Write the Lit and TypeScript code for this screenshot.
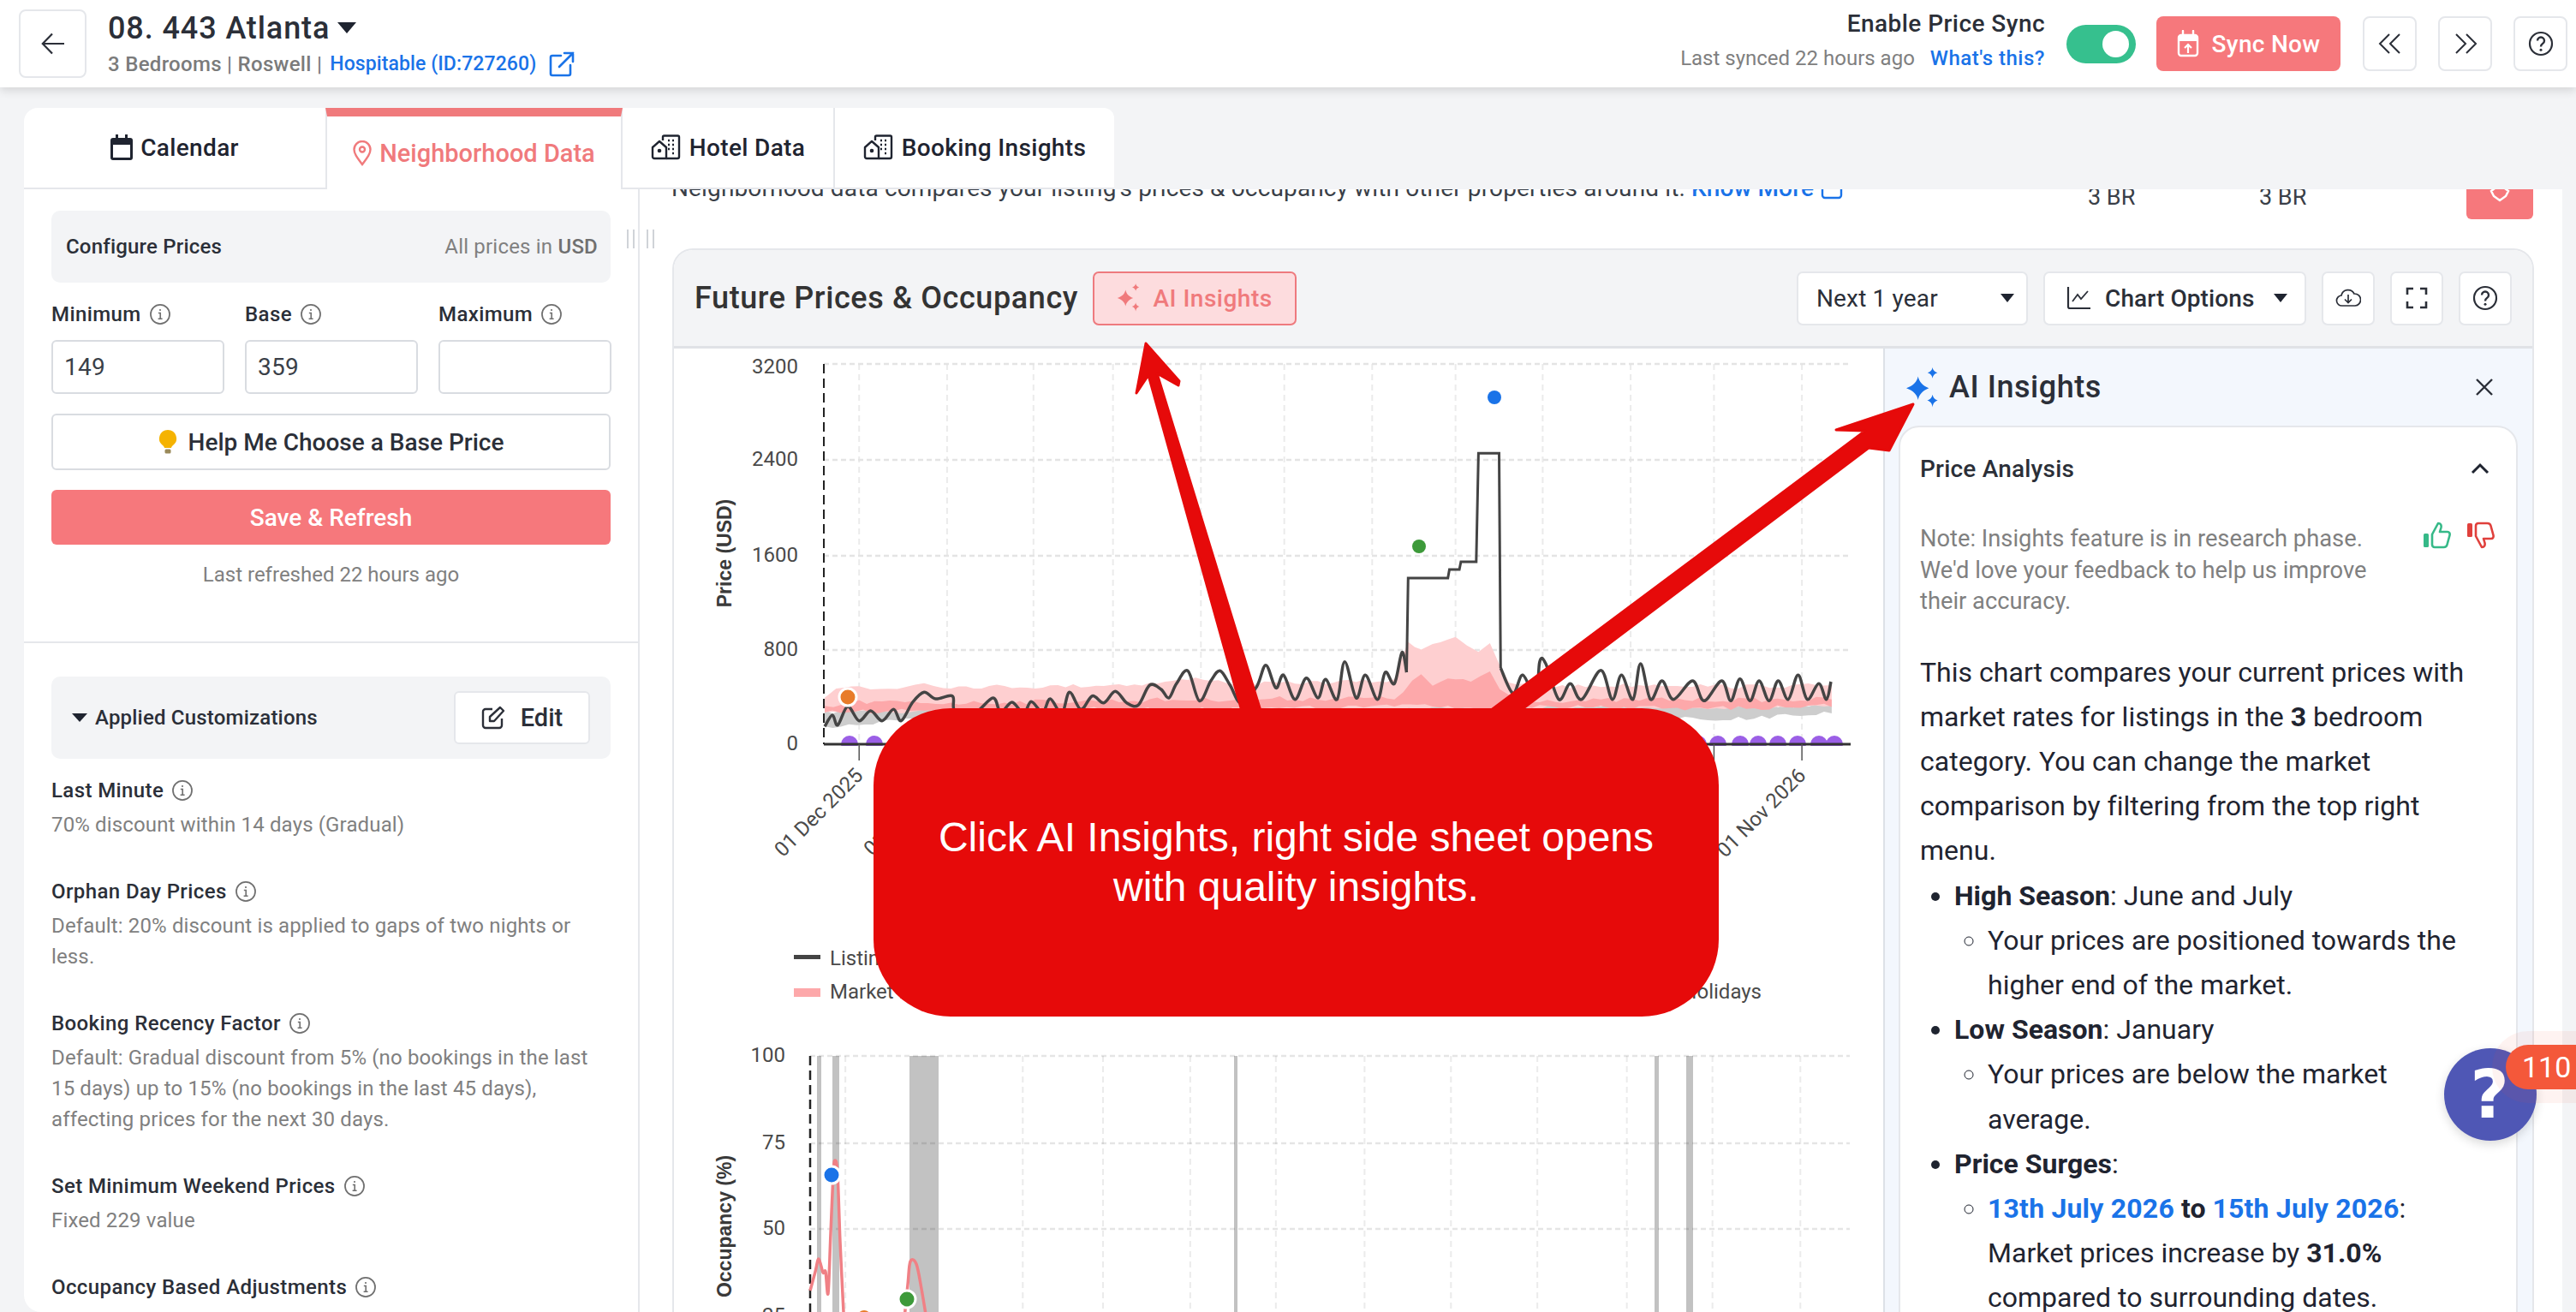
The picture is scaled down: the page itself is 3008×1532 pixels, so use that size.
import { LitElement, html, css, svg } from "lit";
import { customElement } from "lit/decorators.js";

const zx = (x: number) => 780 + x / 1.12;
const zy = (y: number) => 400 + y / 3;
const zp = (a: number[][]) => a.map(([x, y]) => [zx(x), zy(y)]);
let seed = 7;
const rnd = () => { seed = (seed * 16807) % 2147483647; return seed / 2147483647; };
const jag = (a: number[][], amp: number) => {
  const p = zp(a);
  const out: number[][] = [];
  for (let i = 0; i < p.length - 1; i++) {
    const [x0, y0] = p[i];
    const [x1, y1] = p[i + 1];
    const n = Math.max(1, Math.round(Math.abs(x1 - x0) / 9));
    for (let k = 0; k < n; k++) {
      const t = k / n;
      const edge = x0 === x1 ? 0 : amp;
      out.push([x0 + (x1 - x0) * t, y0 + (y1 - y0) * t + (rnd() - 0.5) * edge]);
    }
  }
  out.push(p[p.length - 1]);
  return out.map(([x, y]) => `${x.toFixed(1)},${y.toFixed(1)}`).join(" ");
};
const smooth = (p: number[][]) => {
  let d = `M${p[0][0].toFixed(1)} ${p[0][1].toFixed(1)}`;
  for (let i = 0; i < p.length - 1; i++) {
    const a = p[Math.max(0, i - 1)];
    const b = p[i];
    const c = p[i + 1];
    const e = p[Math.min(p.length - 1, i + 2)];
    const c1x = b[0] + (c[0] - a[0]) / 6;
    const c1y = b[1] + (c[1] - a[1]) / 6;
    const c2x = c[0] - (e[0] - b[0]) / 6;
    const c2y = c[1] - (e[1] - b[1]) / 6;
    d += ` C${c1x.toFixed(1)} ${c1y.toFixed(1)} ${c2x.toFixed(1)} ${c2y.toFixed(1)} ${c[0].toFixed(1)} ${c[1].toFixed(1)}`;
  }
  return d;
};

const listingA = zp([[205,1345],[215,1305],[222,1340],[235,1275],[250,1325],[265,1290],[280,1325],[295,1285],[305,1325],[320,1260],[335,1225],[350,1248],[372,1238],[375,1290],[400,1300],[425,1245],[435,1295],[450,1260],[465,1300],[475,1258],[490,1295],[500,1248],[515,1300],[525,1225],[540,1285],[555,1238],[570,1262],[585,1222],[600,1262],[615,1270],[630,1200],[645,1215],[655,1245],[665,1195],[680,1150],[695,1255],[710,1185],[722,1150],[735,1200],[750,1265],[770,1205],[782,1130],[795,1210],[805,1165],[820,1250],[835,1175],[850,1245],[860,1180],[875,1250],[885,1118],[900,1245],[912,1165],[928,1250],[938,1155],[950,1195],[960,1085],[966,1155]]);
const listingB = zp([[1089,1140],[1105,1228],[1118,1165],[1135,1245],[1140,1118],[1148,1125],[1165,1250],[1180,1195],[1195,1250],[1220,1148],[1235,1250],[1247,1165],[1262,1250],[1272,1125],[1285,1250],[1300,1185],[1315,1250],[1340,1185],[1355,1255],[1378,1185],[1390,1255],[1402,1178],[1415,1255],[1427,1185],[1440,1255],[1452,1185],[1465,1250],[1478,1165],[1490,1250],[1505,1195],[1515,1250],[1521,1188]]);
const spike = zp([[966,1155],[968,825],[1020,825],[1022,795],[1035,795],[1037,768],[1057,768],[1060,388],[1087,388],[1089,1140]]);
const spikeStr = spike.map(([x, y]) => `${x.toFixed(1)},${y.toFixed(1)}`).join(" ");

const bandGrey = jag([[205,1295],[300,1280],[950,1265],[1000,1258],[1100,1270],[1522,1272],[1522,1298],[1400,1318],[1200,1310],[1000,1300],[300,1325],[205,1345]], 5);
const bandLight = jag([[205,1240],[220,1210],[250,1205],[265,1215],[300,1210],[335,1190],[360,1205],[500,1205],[630,1195],[700,1175],[730,1190],[780,1195],[850,1190],[950,1185],[968,1045],[985,1075],[1000,1055],[1030,1028],[1045,1060],[1060,1090],[1075,1060],[1088,1130],[1100,1195],[1180,1205],[1300,1198],[1400,1205],[1522,1200],[1522,1275],[205,1295]], 5);
const bandDark = jag([[205,1280],[250,1260],[400,1262],[700,1250],[950,1245],[985,1165],[1000,1200],[1020,1180],[1050,1190],[1075,1150],[1088,1215],[1110,1250],[1200,1255],[1300,1250],[1400,1252],[1522,1250],[1522,1272],[1400,1280],[1300,1280],[950,1275],[205,1295]], 6);

const c1Grid = [250,365,478,582,697,806,921,1030,1144,1259,1368,1483].map(zx);
const c2Grid = [232,349,464,569,683,795,911,1024,1137,1254,1366,1481].map(zx);
const purple = [992,1021,1983,2006,2032,2053,2076,2099,2124,2142];

const pinkA = [[946,1507],[952,1485],[956,1470],[961,1486],[964,1485],[967,1510],[970,1440],[973,1370],[975,1355],[978,1370],[981,1450],[985,1532]];
const pinkB = [[1056,1540],[1060,1500],[1063,1473],[1070,1476],[1076,1505],[1081,1535]];

const info = html`<svg class="ic-info" viewBox="0 0 24 24" fill="none" stroke="currentColor" stroke-width="1.6"><circle cx="12" cy="12" r="10.2"/><path d="M10 10.6h2.2v6.2M9.8 16.9h4.6" stroke-width="1.5"/><circle cx="12" cy="7.4" r="1" fill="currentColor" stroke="none"/></svg>`;
const hotel = html`<svg class="ic-tab" viewBox="0 0 36 30" fill="none" stroke="currentColor" stroke-width="2.4" stroke-linejoin="round"><path d="M2 15 10 8l8 7v13H4a2 2 0 0 1-2-2Z"/><circle cx="10" cy="19" r="2.3" fill="currentColor" stroke="none"/><path d="M14 7V3a1.5 1.5 0 0 1 1.5-1.5h16A1.5 1.5 0 0 1 33 3v23a2 2 0 0 1-2 2H18"/><path d="M20 7h2M25 7h2M20 12h2M25 12h2M20 17h2M25 17h2M25 22h2" stroke-width="2.6"/></svg>`;
const sparkle = html`<svg viewBox="0 0 36 46" fill="currentColor"><path d="M13 10c1.2 6 4.8 10 12 13-7.200 3-10.800 7-12 13C11.800 30 8 26 0 23c8-3 11.800-7 13-13Z"/><path d="M29 0c.5 3 2 4.700 5.500 6C31 7.300 29.500 9 29 12c-.5-3-2-4.700-5.500-6C27 4.700 28.500 3 29 0Z"/><path d="M29 30c.6 3.300 2.200 5.200 5.800 6.500C31.200 37.800 29.600 39.700 29 44c-.6-4.300-2.200-6.200-5.800-7.500C26.800 35.200 28.400 33.300 29 30Z"/></svg>`;

@customElement("app-root")
export class AppRoot extends LitElement {
  static styles = css`
    :host { display: block; position: relative; width: 3008px; height: 1532px; overflow: hidden; background: #f3f4f6; font-family: Roboto, "Liberation Sans", sans-serif; color: #1f2430; }
    * { box-sizing: border-box; }
    svg { display: block; flex: none; }

    .top { height: 102px; background: #fff; box-shadow: 0 4px 10px rgba(0,0,0,.12); display: flex; align-items: center; padding: 0 10px 0 22px; position: relative; z-index: 2; }
    .back { width: 79px; height: 80px; border: 2px solid #e5e7eb; border-radius: 8px; display: flex; align-items: center; justify-content: center; }
    .back svg { width: 28px; height: 26px; }
    .ttl { margin-left: 25px; flex: 1; }
    .ttl-a { font-size: 36px; font-weight: 500; line-height: 42px; color: #2b2f38; display: flex; align-items: center; letter-spacing: .9px; margin-top: -1px; }
    .caret { width: 0; height: 0; border-left: 11px solid transparent; border-right: 11px solid transparent; border-top: 13px solid #1f2430; margin-left: 9px; }
    .ttl-b { display: flex; align-items: center; font-size: 24px; color: #7b7b7b; line-height: 30px; margin-top: 6px; font-weight: 500; letter-spacing: .3px; }
    .ttl-b a { color: #1a73e8; font-size: 23px; margin-left: 9px; letter-spacing: .1px; }
    .ttl-b svg { width: 30px; height: 30px; margin-left: 15px; }
    .sync { text-align: right; margin: 0 25px 9px 0; }
    .sync-a { font-size: 28px; font-weight: 500; color: #2b2f38; line-height: 34px; letter-spacing: .45px; }
    .sync-b { font-size: 24px; color: #808080; line-height: 30px; margin-top: 8px; }
    .sync-b a { color: #1a73e8; font-weight: 500; margin-left: 12px; letter-spacing: .5px; }
    .toggle { width: 81px; height: 45px; border-radius: 23px; background: #36c08e; margin-right: 24px; display: flex; align-items: center; justify-content: flex-end; padding-right: 8px; }
    .toggle i { width: 31px; height: 31px; border-radius: 50%; background: #fff; display: block; }
    .syncbtn { width: 215px; height: 64px; border-radius: 8px; background: #f6787c; color: #fff; font-size: 28px; font-weight: 500; display: flex; align-items: center; justify-content: center; gap: 15px; margin-right: 26px; letter-spacing: .3px; }
    .syncbtn svg { width: 26px; height: 32px; }
    .sq { width: 63px; height: 64px; background: #fff; border: 2px solid #e5e7eb; border-radius: 8px; display: flex; align-items: center; justify-content: center; margin-left: 25px; color: #2b2f38; }
    .syncbtn + .sq { margin-left: 0; }
    .sq svg { width: 30px; height: 30px; }

    .tabs { display: flex; height: 95px; margin: 24px 0 0 28px; }
    .tab { display: flex; align-items: center; justify-content: center; gap: 9px; font-size: 28px; font-weight: 500; background: #fff; border-bottom: 2px solid #e5e7eb; padding-bottom: 1px; color: #1f2430; letter-spacing: .35px; }
    .tab.cal { width: 352px; border-radius: 16px 0 0 0; }
    .tab.hood { width: 347px; border-top: 10px solid #f07a7c; border-bottom: none; border-left: 2px solid #e5e7eb; border-right: 2px solid #e5e7eb; color: #f07a7c; padding-bottom: 0; font-size: 29px; letter-spacing: 0; }
    .tab.hot { width: 246px; }
    .tab.book { width: 328px; border-left: 2px solid #e5e7eb; border-radius: 0 12px 0 0; }
    .ic-tab { width: 36px; height: 30px; }
    .tab svg.cali { width: 26px; height: 30px; }
    .tab svg.pin { width: 22px; height: 30px; }

    .main { display: flex; height: 1311px; margin: 0 16px 0 28px; background: #fff; border-radius: 0 0 0 20px; position: relative; }
    .left { width: 719px; border-right: 2px solid #e5e7eb; padding: 25px 32px 0; overflow: hidden; flex: none; border-radius: 0 0 0 20px; }
    .box { background: #f3f4f6; border-radius: 10px; display: flex; align-items: center; justify-content: space-between; }
    .cfg { height: 84px; padding: 0 15px 0 17px; font-size: 24px; font-weight: 500; color: #2b2f38; letter-spacing: .2px; }
    .cfg span { font-weight: 400; color: #808080; letter-spacing: .2px; }
    .cfg b { font-weight: 500; color: #707070; }
    .grid3 { display: grid; grid-template-columns: repeat(3, 202px); column-gap: 24px; margin-top: 22px; }
    .fl { display: flex; align-items: center; gap: 9px; font-size: 24px; font-weight: 500; color: #2b2f38; height: 30px; letter-spacing: .4px; }
    .ic-info { width: 26px; height: 26px; color: #707070; }
    .inp { height: 63px; margin-top: 15px; border: 2px solid #d9dce1; border-radius: 6px; padding-left: 13px; font-size: 28px; line-height: 60px; color: #3a3f48; letter-spacing: .3px; }
    .btn { display: flex; align-items: center; justify-content: center; border-radius: 6px; font-size: 28px; font-weight: 500; }
    .help { height: 66px; margin-top: 23px; border: 2px solid #d9dce1; color: #2b2f38; gap: 13px; }
    .help svg { width: 22px; height: 30px; }
    .save { height: 64px; margin-top: 23px; background: #f6787c; color: #fff; }
    .refreshed { text-align: center; font-size: 24px; line-height: 32px; margin-top: 19px; color: #808080; }
    .div { height: 2px; background: #e5e7eb; margin: 62px -32px 39px; }
    .cust { height: 96px; padding: 0 24px 0 24px; }
    .cust-t { display: flex; align-items: center; font-size: 24px; font-weight: 500; color: #2b2f38; gap: 9px; letter-spacing: .2px; }
    .cust-t i { width: 0; height: 0; border-left: 9px solid transparent; border-right: 9px solid transparent; border-top: 10px solid #1f2430; display: block; }
    .edit { width: 159px; height: 62px; background: #fff; border: 2px solid #e5e7eb; border-radius: 6px; display: flex; align-items: center; justify-content: center; gap: 18px; font-size: 29px; font-weight: 500; color: #2b2f38; }
    .edit svg { width: 28px; height: 28px; }
    .item { margin-top: 42px; }
    .item.first { margin-top: 19px; }
    .item .fl { height: 36px; }
    .desc { font-size: 24px; line-height: 36px; color: #808080; margin-top: 4px; letter-spacing: .14px; }
    .lnk { font-size: 24px; line-height: 36px; color: #1a73e8; font-weight: 500; letter-spacing: .4px; margin-top: 2px; }

    .gap { position: absolute; top: 47px; left: 704px; display: flex; gap: 5px; }
    .gap i { width: 2px; height: 22px; background: #d0d3d8; display: block; }
    .gap i:nth-child(2) { margin-right: 9px; }

    .right { flex: 1; overflow: hidden; padding: 0 5px 0 39px; }
    .scroll { margin-top: -21px; }
    .intro { display: grid; grid-template-columns: 1654px 200px 242px 78px; height: 56px; margin-left: -2px; font-size: 28px; color: #3a3f48; }
    .intro-t { line-height: 40px; white-space: nowrap; display: flex; align-items: center; height: 40px; gap: 7px; letter-spacing: .14px; }
    .intro-t a { color: #1a73e8; font-weight: 500; }
    .intro-t svg { width: 28px; height: 28px; }
    .br { padding-top: 11px; line-height: 38px; font-size: 27px; }
    .rbtn { background: #f6787c; border-radius: 6px; display: flex; justify-content: center; padding-top: 12px; }
    .rbtn svg { width: 26px; height: 24px; }
    .card { margin: 34px 0 0 -1px; width: 2174px; height: 1300px; border: 2px solid #e5e7eb; border-bottom: none; border-radius: 24px 24px 0 0; overflow: hidden; }
    .card-h { height: 115px; background: #f3f4f6; border-bottom: 3px solid #e0e2e6; display: flex; align-items: center; padding-right: 24px; padding-left: 24px; }
    .card-t { font-size: 36px; font-weight: 500; color: #333; margin-right: 17px; letter-spacing: .6px; }
    .ai { width: 238px; height: 63px; border: 2px solid #ee7a7e; border-radius: 7px; background: #fddcde; color: #f07a7c; font-size: 28px; font-weight: 500; display: flex; align-items: center; justify-content: center; gap: 14px; letter-spacing: .5px; }
    .ai svg { width: 28px; height: 34px; }
    .sp { flex: 1; }
    .ctl { height: 63px; background: #fff; border: 2px solid #e5e7eb; border-radius: 7px; display: flex; align-items: center; margin-left: 18px; font-size: 28px; color: #2b2f38; }
    .ctl.sel { width: 270px; padding: 0 14px 0 21px; justify-content: space-between; letter-spacing: .15px; }
    .ctl.opt { width: 307px; padding: 0 20px 0 24px; font-weight: 500; gap: 16px; letter-spacing: .1px; }
    .ctl.opt span { flex: 1; }
    .ctl.ico { width: 62px; justify-content: center; }
    .ctl svg { width: 30px; height: 30px; }
    .ctl i { width: 0; height: 0; border-left: 8px solid transparent; border-right: 8px solid transparent; border-top: 10px solid #1f2430; display: block; }
    .card-b { display: flex; height: 1180px; }
    .charts { width: 1412px; flex: none; height: 1125px; }
    .charts text { font-family: Roboto, "Liberation Sans", sans-serif; font-size: 24px; fill: #4a4a4a; }
    .charts text.at { font-family: "Liberation Sans", Arial, sans-serif; font-weight: 700; font-size: 23px; fill: #3a3a3a; }
    .panel { flex: 1; background: #f3f7fd; border-left: 2px solid #dde1e7; padding: 0 17px 0 16px; }
    .p-h { height: 90px; display: flex; align-items: center; font-size: 36px; font-weight: 500; color: #2b2f38; padding: 0 28px 0 9px; gap: 12px; letter-spacing: .55px; }
    .p-h .spark { width: 38px; height: 46px; color: #1a73e8; }
    .p-h .x { width: 22px; height: 22px; margin-left: auto; }
    .p-c { background: #fff; border: 2px solid #e5e7eb; border-radius: 24px 24px 0 0; height: 1100px; padding: 0 23px; }
    .p-t { height: 96px; display: flex; align-items: center; justify-content: space-between; font-size: 28px; font-weight: 500; color: #2b2f38; padding-right: 8px; letter-spacing: .2px; }
    .p-t svg { width: 22px; height: 14px; }
    .note { display: flex; justify-content: space-between; margin-top: 16px; padding-right: 2px; }
    .note p { margin: 0; width: 530px; font-size: 27.300px; line-height: 36.500px; color: #808080; }
    .th { display: flex; gap: 18px; margin-top: -2px; }
    .th svg { width: 33px; height: 32px; }
    .body { font-size: 32px; line-height: 52.200px; color: #1f2430; margin-top: 38px; width: 664px; letter-spacing: .02px; }
    .body p { margin: 0; }
    .body ul { margin: 0; padding-left: 40px; list-style: disc; }
    .body ul ul { list-style: circle; padding-left: 39px; }
    .body b { font-weight: 700; }
    .body a { color: #1a73e8; font-weight: 700; letter-spacing: .2px; }

    .ann { position: absolute; left: 0; top: 0; width: 3008px; height: 1532px; pointer-events: none; z-index: 5; }
    .callout { position: absolute; left: 1020px; top: 827px; width: 987px; height: 360px; background: #e60a0a; border-radius: 90px; z-index: 6; display: flex; align-items: center; justify-content: center; text-align: center; color: #fff; font-family: "Liberation Sans", Arial, sans-serif; font-size: 48px; line-height: 58px; }
    .fab { position: absolute; left: 2854px; top: 1224px; width: 108px; height: 108px; border-radius: 50%; background: #4f57b5; color: #fff; font-size: 78px; font-weight: 700; display: flex; align-items: center; justify-content: center; box-shadow: 0 4px 12px rgba(0,0,0,.15); z-index: 7; font-family: "DejaVu Sans", sans-serif; padding-right: 2px; }
    .badge { position: absolute; left: 2926px; top: 1220px; width: 110px; height: 52px; border-radius: 26px; background: #f4583a; color: #fff; font-size: 34px; padding-left: 19px; line-height: 52px; box-shadow: 0 0 0 16px rgba(244,88,58,.07); z-index: 8; }
  `;

  render() {
    return html`
      <div class="top">
        <div class="back"><svg viewBox="0 0 28 26" fill="none" stroke="#2b2f38" stroke-width="2.200"><path d="M27 13H2M13 1.500 1.800 13 13 24.500"/></svg></div>
        <div class="ttl">
          <div class="ttl-a">08. 443 Atlanta<i class="caret"></i></div>
          <div class="ttl-b">3 Bedrooms | Roswell | <a>Hospitable (ID:727260)</a>
            <svg viewBox="0 0 30 30" fill="none" stroke="#1a73e8" stroke-width="2.600" stroke-linecap="round"><path d="M14 5H4a2 2 0 0 0-2 2v19a2 2 0 0 0 2 2h19a2 2 0 0 0 2-2V16M12 18 28 2M18 2h10v10"/></svg>
          </div>
        </div>
        <div class="sync">
          <div class="sync-a">Enable Price Sync</div>
          <div class="sync-b">Last synced 22 hours ago <a>What's this?</a></div>
        </div>
        <div class="toggle"><i></i></div>
        <div class="syncbtn">
          <svg viewBox="0 0 26 32" fill="none" stroke="#fff" stroke-width="2.400"><rect x="2" y="6" width="22" height="24" rx="3"/><path d="M2 10h22" stroke-width="6"/><path d="M7 1v6M19 1v6" stroke-linecap="round"/><path d="M13 27V17M9 21l4-4 4 4" stroke-width="2.200"/></svg>
          Sync Now
        </div>
        <div class="sq"><svg viewBox="0 0 30 30" fill="none" stroke="currentColor" stroke-width="2"><path d="M14 4 3 15l11 11M26 4 15 15l11 11"/></svg></div>
        <div class="sq"><svg viewBox="0 0 30 30" fill="none" stroke="currentColor" stroke-width="2"><path d="M4 4l11 11L4 26M16 4l11 11-11 11"/></svg></div>
        <div class="sq"><svg viewBox="0 0 30 30" fill="none" stroke="currentColor" stroke-width="2.200"><circle cx="15" cy="15" r="13"/><path d="M11 11.500a4 4 0 1 1 6 3.500c-1.500 1-2 1.700-2 3.500" stroke-width="2.400"/><circle cx="15" cy="22.300" r="1.500" fill="currentColor" stroke="none"/></svg></div>
      </div>

      <div class="tabs">
        <div class="tab cal"><svg class="cali" viewBox="0 0 26 30" fill="#1f2430"><path d="M6 0h3v4h8V0h3v4h3a3 3 0 0 1 3 3v20a3 3 0 0 1-3 3H3a3 3 0 0 1-3-3V7a3 3 0 0 1 3-3h3Zm-3 12v15h20V12Z"/></svg>Calendar</div>
        <div class="tab hood"><svg class="pin" viewBox="0 0 22 30" fill="none" stroke="#f07a7c" stroke-width="2.400"><path d="M11 28C5 20 1.500 15.500 1.500 10.500a9.500 9.500 0 0 1 19 0C20.500 15.500 17 20 11 28Z"/><circle cx="11" cy="10.500" r="3"/></svg>Neighborhood Data</div>
        <div class="tab hot">${hotel}Hotel Data</div>
        <div class="tab book">${hotel}Booking Insights</div>
      </div>

      <div class="main">
        <div class="left">
          <div class="box cfg">Configure Prices<span>All prices in <b>USD</b></span></div>
          <div class="grid3">
            <div class="fl">Minimum ${info}</div>
            <div class="fl">Base ${info}</div>
            <div class="fl">Maximum ${info}</div>
            <div class="inp">149</div>
            <div class="inp">359</div>
            <div class="inp"></div>
          </div>
          <div class="btn help">
            <svg viewBox="0 0 22 30"><path d="M11 1a10 10 0 0 0-6 18c1.200 1 1.800 2 2 3h8c.2-1 .8-2 2-3a10 10 0 0 0-6-18Z" fill="#f5b301"/><rect x="7.500" y="23.500" width="7" height="5" rx="1.500" fill="#9a8a5a"/></svg>
            Help Me Choose a Base Price
          </div>
          <div class="btn save">Save &amp; Refresh</div>
          <div class="refreshed">Last refreshed 22 hours ago</div>
          <div class="div"></div>
          <div class="box cust">
            <div class="cust-t"><i></i>Applied Customizations</div>
            <div class="edit"><svg viewBox="0 0 28 28" fill="none" stroke="#2b2f38" stroke-width="2.400" stroke-linejoin="round"><path d="M13 4H5a3 3 0 0 0-3 3v16a3 3 0 0 0 3 3h16a3 3 0 0 0 3-3v-8"/><path d="M10 18v-5L22 2l4 4-11 12Z"/></svg>Edit</div>
          </div>
          <div class="item first"><div class="fl">Last Minute ${info}</div><div class="desc">70% discount within 14 days (Gradual)</div></div>
          <div class="item"><div class="fl">Orphan Day Prices ${info}</div><div class="desc">Default: 20% discount is applied to gaps of two nights or<br />less.</div></div>
          <div class="item"><div class="fl">Booking Recency Factor ${info}</div><div class="desc">Default: Gradual discount from 5% (no bookings in the last<br />15 days) up to 15% (no bookings in the last 45 days),<br />affecting prices for the next 30 days.</div></div>
          <div class="item"><div class="fl">Set Minimum Weekend Prices ${info}</div><div class="desc">Fixed 229 value</div></div>
          <div class="item"><div class="fl">Occupancy Based Adjustments ${info}</div><div class="lnk">Some Attractive Discounting</div></div>
        </div>
        <div class="gap"><i></i><i></i><i></i><i></i></div>

        <div class="right">
          <div class="scroll">
            <div class="intro">
              <div class="intro-t">Neighborhood data compares your listing's prices &amp; occupancy with other properties around it. <a>Know More</a>
                <svg viewBox="0 0 28 28" fill="none" stroke="#1a73e8" stroke-width="2.400"><rect x="3" y="3" width="22" height="22" rx="3"/></svg></div>
              <div class="br">3 BR</div>
              <div class="br">3 BR</div>
              <div class="rbtn"><svg viewBox="0 0 26 24" fill="none" stroke="#fff" stroke-width="2.500"><path d="M13 22 6 17l-3-6 4-3 2-5h8l2 5 4 3-3 6Z"/></svg></div>
            </div>
            <div class="card">
              <div class="card-h">
                <div class="card-t">Future Prices &amp; Occupancy</div>
                <div class="ai">${sparkle}AI Insights</div>
                <div class="sp"></div>
                <div class="ctl sel">Next 1 year<i></i></div>
                <div class="ctl opt"><svg viewBox="0 0 30 30" fill="none" stroke="#2b2f38" stroke-width="2.200"><path d="M3 2v23a2 2 0 0 0 2 2h24"/><path d="M8 19l6-8 4 5 8-9" stroke-width="1.800"/></svg><span>Chart Options</span><i></i></div>
                <div class="ctl ico"><svg viewBox="0 0 30 30" fill="none" stroke="#2b2f38" stroke-width="1.700"><path d="M8 24a6 6 0 0 1-1-12 8 8 0 0 1 15-2 7 7 0 0 1 1 14Z"/><path d="M15 11v9M11 16.500l4 4 4-4"/></svg></div>
                <div class="ctl ico"><svg viewBox="0 0 30 30" fill="none" stroke="#2b2f38" stroke-width="2.600"><path d="M4 11V4h7M19 4h7v7M26 19v7h-7M11 26H4v-7"/></svg></div>
                <div class="ctl ico"><svg viewBox="0 0 30 30" fill="none" stroke="#2b2f38" stroke-width="2.200"><circle cx="15" cy="15" r="13"/><path d="M11 11.500a4 4 0 1 1 6 3.500c-1.500 1-2 1.700-2 3.500" stroke-width="2.400"/><circle cx="15" cy="22.300" r="1.500" fill="#2b2f38" stroke="none"/></svg></div>
              </div>
              <div class="card-b">
                <svg class="charts" viewBox="787 407 1412 1125">
                  ${this.chart1()}
                  ${this.chart2()}
                </svg>
                <div class="panel">
                  <div class="p-h"><span class="spark">${sparkle}</span>AI Insights
                    <svg class="x" viewBox="0 0 22 22" stroke="#2b2f38" stroke-width="2.400"><path d="M2 2l18 18M20 2 2 20"/></svg></div>
                  <div class="p-c">
                    <div class="p-t">Price Analysis<svg viewBox="0 0 22 14" fill="none" stroke="#1f2430" stroke-width="3"><path d="M2 12 11 3l9 9"/></svg></div>
                    <div class="note">
                      <p>Note: Insights feature is in research phase. We'd love your feedback to help us improve their accuracy.</p>
                      <div class="th">
                        <svg viewBox="0 0 33 32" fill="none" stroke="#36b988" stroke-width="2.600" stroke-linejoin="round"><rect x="1" y="14" width="6" height="16" rx="1.500" fill="#36b988" stroke="none"/><path d="M11 15 18 2c3 0 4 2 3.500 5L20 12h9c2 0 3 2 2.500 4l-3 11c-.5 2-2 3-4 3H14c-2 0-3-1.500-3-3Z"/></svg>
                        <svg viewBox="0 0 33 32" fill="none" stroke="#e0403c" stroke-width="2.600" stroke-linejoin="round"><rect x="1" y="2" width="6" height="16" rx="1.500" fill="#e0403c" stroke="none"/><path d="M11 17l7 13c3 0 4-2 3.500-5L20 20h9c2 0 3-2 2.500-4l-3-11c-.5-2-2-3-4-3H14c-2 0-3 1.500-3 3Z"/></svg>
                      </div>
                    </div>
                    <div class="body">
                      <p>This chart compares your current prices with market rates for listings in the <b>3</b> bedroom category. You can change the market comparison by filtering from the top right menu.</p>
                      <ul>
                        <li><b>High Season</b>: June and July<ul><li>Your prices are positioned towards the higher end of the market.</li></ul></li>
                        <li><b>Low Season</b>: January<ul><li>Your prices are below the market average.</li></ul></li>
                        <li><b>Price Surges</b>:<ul><li><a>13th July 2026</a> <b>to</b> <a>15th July 2026</a>: Market prices increase by <b>31.0%</b> compared to surrounding dates.</li></ul></li>
                      </ul>
                    </div>
                  </div>
                </div>
              </div>
            </div>
          </div>
        </div>
      </div>

      <svg class="ann" viewBox="0 0 3008 1532">
        <polygon fill="#e60a0a" stroke="#e60a0a" stroke-width="3" stroke-linejoin="round" points="1338,401 1377,445 1376,450 1351,436 1472,830 1450,830 1341,438 1327,459"></polygon>
        <polygon fill="#e60a0a" stroke="#e60a0a" stroke-width="3" stroke-linejoin="round" points="2234,472 2206,526 2182,523 1775,830 1740,830 2178,503 2144,502"></polygon>
      </svg>
      <div class="callout"><div>Click AI Insights, right side sheet opens<br />with quality insights.</div></div>
      <div class="fab">?</div>
      <div class="badge">110</div>
    `;
  }

  chart1() {
    const ys = [[425,"3200",11],[537,"2400",7],[649,"1600",7],[759,"800",7],[869,"0",7]] as [number,string,number][];
    return svg`
      ${c1Grid.map(x => svg`<line x1=${x} x2=${x} y1="425" y2="869" stroke="#ebebeb" stroke-width="2" stroke-dasharray="7 5"></line>`)}
      ${ys.slice(0,4).map(([y]) => svg`<line x1="962" x2="2161" y1=${y} y2=${y} stroke="#e4e4e4" stroke-width="2.500" stroke-dasharray="6 4"></line>`)}
      ${ys.map(([y,t,o]) => svg`<text x="932" y=${y+o} text-anchor="end">${t}</text>`)}
      <text class="at" transform="translate(854 646) rotate(-90)" text-anchor="middle">Price (USD)</text>
      <polygon points=${bandGrey} fill="#cdcdcd"></polygon>
      <polygon points=${bandLight} fill="#fecfd0"></polygon>
      <polygon points=${bandDark} fill="#fda8aa"></polygon>
      <path d=${smooth(listingA)} fill="none" stroke="#444" stroke-width="3.500" stroke-linejoin="round"></path>
      <polyline points=${spikeStr} fill="none" stroke="#444" stroke-width="3"></polyline>
      <path d=${smooth(listingB)} fill="none" stroke="#444" stroke-width="3.500" stroke-linejoin="round"></path>
      <line x1="962" x2="962" y1="425" y2="869" stroke="#222" stroke-width="2" stroke-dasharray="11 6"></line>
      ${purple.map(x => svg`<circle cx=${x} cy="869" r="10" fill="#9b5fe6"></circle>`)}
      <rect x="950" y="871" width="1215" height="30" fill="#fff"></rect>
      <line x1="962" x2="2161" y1="869" y2="869" stroke="#333" stroke-width="3"></line>
      ${c1Grid.map(x => svg`<line x1=${x} x2=${x} y1="869" y2="888" stroke="#555" stroke-width="1.500"></line>`)}
      ${[[1009,"01 Dec 2025"],[1112,"01 Jan 2026"],[2110,"01 Nov 2026"]].map(([x,t]) => svg`<text transform="translate(${x} 907) rotate(-45)" text-anchor="end">${t}</text>`)}
      <circle cx="990" cy="814" r="10" fill="#e87c2a" stroke="#fff" stroke-width="3"></circle>
      <circle cx="1745" cy="464" r="8" fill="#1a73e8"></circle>
      <circle cx="1657" cy="638" r="8" fill="#3d9a3a"></circle>
      <rect x="927" y="1115" width="31" height="5" fill="#444"></rect>
      <text x="969" y="1127">Listing Price</text>
      <rect x="927" y="1154" width="31" height="10" fill="#fda8aa"></rect>
      <text x="969" y="1166">Market Price Range</text>
      <text x="2057" y="1166" text-anchor="end">Holidays</text>
    `;
  }

  chart2() {
    const bars = [[954,5],[972,8],[1062,34],[1441,4],[1932,5],[1969,8]];
    const ys = [[1233,"100"],[1335,"75"],[1435,"50"],[1537,"25"]] as [number,string][];
    return svg`
      ${c2Grid.map(x => svg`<line x1=${x} x2=${x} y1="1233" y2="1532" stroke="#ebebeb" stroke-width="2" stroke-dasharray="7 5"></line>`)}
      ${bars.map(([x,w]) => svg`<rect x=${x} y="1233" width=${w} height="300" fill="#c2c2c2"></rect>`)}
      ${ys.slice(0,3).map(([y]) => svg`<line x1="946" x2="2160" y1=${y} y2=${y} stroke="#000" stroke-opacity=".1" stroke-width="2.500" stroke-dasharray="6 4"></line>`)}
      ${ys.map(([y,t]) => svg`<text x="917" y=${y+7} text-anchor="end">${t}</text>`)}
      <text class="at" transform="translate(854 1432) rotate(-90)" text-anchor="middle">Occupancy (%)</text>
      <line x1="946" x2="946" y1="1233" y2="1532" stroke="#222" stroke-width="2.500" stroke-dasharray="11 6"></line>
      <path d=${smooth(pinkA)} fill="none" stroke="#f08085" stroke-width="3.500"></path>
      <path d=${smooth(pinkB)} fill="none" stroke="#f08085" stroke-width="3.500"></path>
      <circle cx="971" cy="1372" r="10" fill="#1a73e8" stroke="#fff" stroke-width="3"></circle>
      <circle cx="1059" cy="1517" r="10" fill="#3d9a3a" stroke="#fff" stroke-width="3"></circle>
      <circle cx="1009" cy="1538" r="8" fill="#e87c2a"></circle>
    `;
  }
}
